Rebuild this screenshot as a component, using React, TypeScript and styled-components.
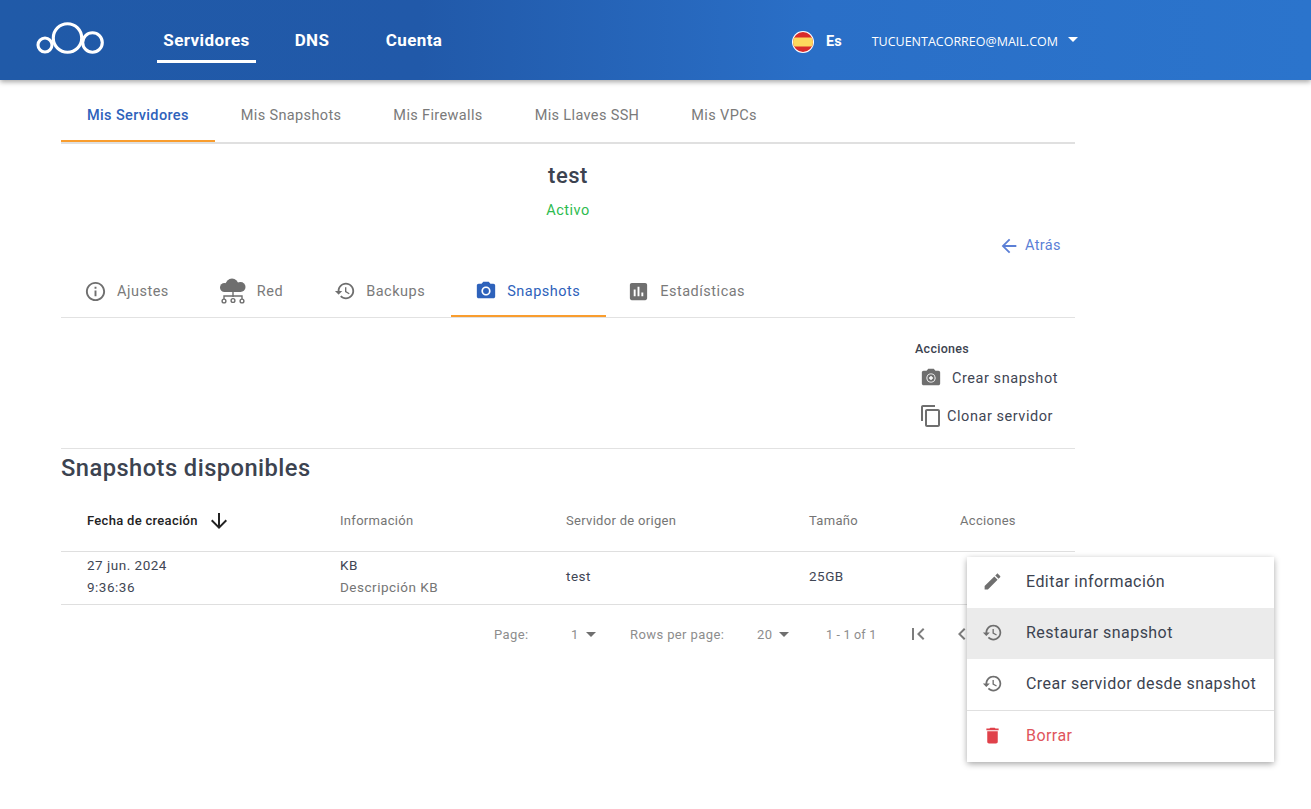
import * as React from "react";
import styled, { createGlobalStyle } from "styled-components";

const GlobalStyle = createGlobalStyle`
  html, body {
    margin: 0;
    padding: 0;
    background: #fff;
    font-family: Roboto, "Liberation Sans", sans-serif;
    color: #3c4350;
    overflow: hidden;
  }
  * { box-sizing: border-box; }
`;

const Page = styled.div`
  position: relative;
  width: 1311px;
  height: 809px;
  overflow: hidden;
`;

const TopBar = styled.header`
  height: 80px;
  display: flex;
  align-items: center;
  padding-left: 35px;
  background: linear-gradient(90deg, #205aa8 0%, #2159a9 32%, #2a6fc7 62%, #2b74cc 100%);
  box-shadow: 0 2px 5px rgba(0, 0, 0, 0.35);
  color: #fff;
`;

const Logo = styled.svg`
  width: 70px;
  height: 36px;
  margin-right: 52px;
`;

const TopNav = styled.nav`
  display: flex;
  height: 80px;
`;

const TopLink = styled.a<{ $active?: boolean; $w: number; $ml?: number }>`
  display: flex;
  align-items: center;
  justify-content: center;
  width: ${(p) => p.$w}px;
  height: 63px;
  margin-left: ${(p) => p.$ml ?? 0}px;
  font-size: 17px;
  font-weight: 700;
  letter-spacing: 0.4px;
  white-space: nowrap;
  padding-top: 20px;
  border-bottom: 3px solid ${(p) => (p.$active ? "#fff" : "transparent")};
`;

const UserArea = styled.div`
  display: flex;
  align-items: center;
  margin-left: auto;
  margin-right: 233px;
  padding-top: 3px;
`;

const Flag = styled.svg`
  width: 22px;
  height: 22px;
  margin-right: 12px;
`;

const Lang = styled.span`
  font-size: 14.5px;
  font-weight: 700;
  margin-right: 30px;
`;

const Email = styled.span`
  font-family: "Open Sans", sans-serif;
  font-size: 12.5px;
  margin-right: 10px;
`;

const Caret = styled.span`
  width: 0;
  height: 0;
  margin-bottom: 5px;
  border-left: 5px solid transparent;
  border-right: 5px solid transparent;
  border-top: 5px solid #fff;
`;

const Main = styled.main`
  width: 1014px;
  margin-left: 61px;
`;

const TabRow = styled.div<{ $h: number; $lineColor: string; $lineH: number }>`
  display: flex;
  height: ${(p) => p.$h}px;
  border-bottom: ${(p) => p.$lineH}px solid ${(p) => p.$lineColor};
`;

const Tab = styled.a<{ $active?: boolean; $pl?: number; $top?: number }>`
  display: flex;
  align-items: center;
  gap: 10px;
  height: 100%;
  padding: ${(p) => p.$top ?? 0}px 26px 0 ${(p) => p.$pl ?? 26}px;
  font-size: 14.5px;
  font-weight: 400;
  letter-spacing: 0.5px;
  white-space: nowrap;
  color: ${(p) => (p.$active ? "#2e62bb" : "#7a7a7a")};
  border-bottom: 2px solid ${(p) => (p.$active ? "#f99d2e" : "transparent")};
`;

const PageTab = styled(Tab)`
  padding-top: 10px;
  letter-spacing: 0.36px;
  font-weight: ${(p) => (p.$active ? 500 : 400)};
`;

const Icon = styled.svg<{ $size?: number; $color?: string }>`
  width: ${(p) => p.$size ?? 24}px;
  height: ${(p) => p.$size ?? 24}px;
  flex: none;
  fill: ${(p) => p.$color ?? "#6f6f6f"};
`;

const ServerHead = styled.section`
  display: flex;
  flex-direction: column;
  align-items: center;
  height: 121px;
  padding-top: 18px;
`;

const ServerName = styled.h1`
  margin: 0;
  font-size: 22px;
  line-height: 28px;
  font-weight: 500;
  letter-spacing: 0.5px;
  color: #3c4350;
`;

const Status = styled.div`
  margin-top: 11px;
  font-size: 14.5px;
  line-height: 20px;
  letter-spacing: 0.5px;
  color: #2dbb4f;
`;

const BackLink = styled.a`
  align-self: flex-end;
  display: flex;
  align-items: center;
  gap: 5px;
  margin: 14px 14px 0 0;
  font-size: 14.5px;
  line-height: 20px;
  letter-spacing: 0.4px;
  color: #5b7fd6;
`;

const ActionsPanel = styled.section`
  display: flex;
  flex-direction: column;
  align-items: flex-start;
  height: 131px;
  padding: 24px 0 0 854px;
  border-bottom: 1px solid #e2e2e2;
`;

const ActionsLabel = styled.div`
  margin-bottom: 3px;
  font-size: 12.5px;
  line-height: 14px;
  font-weight: 500;
  letter-spacing: 0.3px;
  color: #3c4350;
`;

const ActionButton = styled.a<{ $gap: number; $left: number }>`
  display: flex;
  align-items: center;
  gap: ${(p) => p.$gap}px;
  height: 38px;
  padding-left: ${(p) => p.$left}px;
  font-size: 14.5px;
  letter-spacing: 0.55px;
  white-space: nowrap;
  color: #3f4654;
`;

const Heading = styled.h2`
  margin: 0;
  padding-top: 5px;
  height: 44px;
  font-size: 23.7px;
  line-height: 28px;
  font-weight: 500;
  letter-spacing: 0.45px;
  color: #3c4350;
`;

const TableRow = styled.div<{ $h: number; $pb: number }>`
  display: grid;
  grid-template-columns: 253px 226px 243px 151px 141px;
  align-items: center;
  height: ${(p) => p.$h}px;
  padding-bottom: ${(p) => p.$pb}px;
  border-bottom: 1px solid #dfdfdf;
`;

const HeadCell = styled.div<{ $strong?: boolean }>`
  display: flex;
  align-items: center;
  gap: 9px;
  padding-left: 26px;
  font-size: 13px;
  font-weight: ${(p) => (p.$strong ? 500 : 400)};
  letter-spacing: 0.3px;
  color: ${(p) => (p.$strong ? "#222" : "#757575")};
`;

const Cell = styled.div`
  padding-left: 26px;
  font-size: 13.5px;
  line-height: 22px;
  letter-spacing: 0.5px;
  color: #3f4654;
`;

const Muted = styled.div`
  color: #757575;
`;

const Pager = styled.div`
  display: flex;
  align-items: center;
  height: 58px;
  padding-left: 433px;
  font-size: 13px;
  letter-spacing: 0.4px;
  color: #8d8d8d;
`;

const PagerText = styled.span<{ $w: number }>`
  width: ${(p) => p.$w}px;
  flex: none;
`;

const PagerRange = styled(PagerText)`
  font-size: 12.5px;
  letter-spacing: 0.2px;
`;

const PagerValue = styled.span<{ $w: number }>`
  display: flex;
  align-items: center;
  gap: 7px;
  width: ${(p) => p.$w}px;
  flex: none;
`;

const SmallCaret = styled.i`
  width: 0;
  height: 0;
  border-left: 5px solid transparent;
  border-right: 5px solid transparent;
  border-top: 5px solid #6f6f6f;
`;

const Menu = styled.div`
  position: absolute;
  left: 967px;
  top: 557px;
  width: 307px;
  height: 205px;
  background: #fff;
  box-shadow: 0 2px 6px rgba(0, 0, 0, 0.35);
  border-radius: 2px;
`;

const MenuItem = styled.div<{ $hover?: boolean; $danger?: boolean; $line?: boolean }>`
  display: flex;
  align-items: center;
  height: ${(p) => (p.$line ? 52 : 51)}px;
  padding-left: 15px;
  gap: 23px;
  font-size: 16px;
  letter-spacing: 0.45px;
  white-space: nowrap;
  color: ${(p) => (p.$danger ? "#e0555c" : "#3c4350")};
  background: ${(p) => (p.$hover ? "#ebebeb" : "#fff")};
  border-bottom: ${(p) => (p.$line ? "1px solid #e0e0e0" : "none")};
`;

const MenuLabel = styled.span`
  margin-top: -3px;
`;

const MenuIcon = styled.span`
  display: flex;
  margin-top: -2px;
`;

const P = {
  info: "M11 7h2v2h-2zm0 4h2v6h-2zm1-9C6.48 2 2 6.48 2 12s4.48 10 10 10 10-4.48 10-10S17.52 2 12 2zm0 18c-4.41 0-8-3.59-8-8s3.59-8 8-8 8 3.59 8 8-3.59 8-8 8z",
  history:
    "M13 3c-4.97 0-9 4.03-9 9H1l3.89 3.89.07.14L9 12H6c0-3.87 3.13-7 7-7s7 3.13 7 7-3.13 7-7 7c-1.93 0-3.68-.79-4.94-2.06l-1.42 1.42C8.27 19.99 10.51 21 13 21c4.97 0 9-4.03 9-9s-4.03-9-9-9zm-1 5v5l4.28 2.54.72-1.21-3.5-2.08V8H12z",
  camera:
    "M9 2L7.17 4H4c-1.1 0-2 .9-2 2v12c0 1.1.9 2 2 2h16c1.1 0 2-.9 2-2V6c0-1.1-.9-2-2-2h-3.17L15 2H9zm3 15c-2.76 0-5-2.24-5-5s2.24-5 5-5 5 2.24 5 5-2.24 5-5 5z",
  chart:
    "M19 3H5c-1.1 0-2 .9-2 2v14c0 1.1.9 2 2 2h14c1.1 0 2-.9 2-2V5c0-1.1-.9-2-2-2zM9 17H7v-7h2v7zm4 0h-2V7h2v10zm4 0h-2v-4h2v4z",
  edit: "M3 17.25V21h3.75L17.81 9.94l-3.75-3.75L3 17.25zM20.71 7.04c.39-.39.39-1.02 0-1.41l-2.34-2.34c-.39-.39-1.02-.39-1.41 0l-1.83 1.83 3.75 3.75 1.83-1.83z",
  trash: "M6 19c0 1.1.9 2 2 2h8c1.1 0 2-.9 2-2V7H6v12zM19 4h-3.5l-1-1h-5l-1 1H5v2h14V4z",
  copy: "M16 1H4c-1.1 0-2 .9-2 2v14h2V3h12V1zm3 4H8c-1.1 0-2 .9-2 2v14c0 1.1.9 2 2 2h11c1.1 0 2-.9 2-2V7c0-1.1-.9-2-2-2zm0 16H8V7h11v14z",
  first: "M18.41 16.59L13.82 12l4.59-4.59L17 6l-6 6 6 6zM6 6h2v12H6z",
  prev: "M15.41 7.41L14 6l-6 6 6 6 1.41-1.41L10.83 12z",
  down: "M20 12l-1.41-1.41L13 16.17V4h-2v12.17l-5.58-5.59L4 12l8 8 8-8z",
  back: "M20 11H7.83l5.59-5.59L12 4l-8 8 8 8 1.41-1.41L7.83 13H20v-2z",
};

const Glyph = ({ d, size, color }: { d: string; size?: number; color?: string }) => (
  <Icon viewBox="0 0 24 24" $size={size} $color={color}>
    <path d={d} />
  </Icon>
);

const CloudNetwork = () => (
  <svg width="28" height="26" viewBox="0 0 28 26">
    <g fill="#6f6f6f">
      <circle cx="5.5" cy="9.5" r="4.5" />
      <circle cx="13" cy="7" r="6.5" />
      <circle cx="21.5" cy="9" r="5" />
      <rect x="5" y="9" width="17" height="5" />
    </g>
    <path d="M14 13v6M5 21v-3h18v3" stroke="#6f6f6f" strokeWidth="1.4" fill="none" />
    <circle cx="5" cy="23" r="1.9" stroke="#6f6f6f" strokeWidth="1.4" fill="none" />
    <circle cx="14" cy="22.5" r="1.9" stroke="#6f6f6f" strokeWidth="1.4" fill="none" />
    <circle cx="23" cy="23" r="1.9" stroke="#6f6f6f" strokeWidth="1.4" fill="none" />
  </svg>
);

const CameraPlus = () => (
  <Icon viewBox="0 0 24 24" $size={22} $color="#6f6f6f">
    <path d={P.camera} />
    <circle cx="12" cy="12" r="4" />
    <path d="M11.2 9.8h1.6v1.4h1.4v1.6h-1.4v1.4h-1.6v-1.4H9.8v-1.6h1.4z" fill="#fff" />
  </Icon>
);

const App: React.FC = () => {
  return (
    <Page>
      <GlobalStyle />
      <TopBar>
        <Logo viewBox="0 0 70 36">
          <g fill="none" stroke="#fff" strokeWidth="3.1">
            <circle cx="10" cy="23" r="7" />
            <circle cx="32.5" cy="16" r="14.2" />
            <circle cx="57.5" cy="20.5" r="9.8" />
          </g>
        </Logo>
        <TopNav>
          <TopLink $active $w={99}>Servidores</TopLink>
          <TopLink $w={34} $ml={39}>DNS</TopLink>
          <TopLink $w={58} $ml={56}>Cuenta</TopLink>
        </TopNav>
        <UserArea>
          <Flag viewBox="0 0 22 22">
            <clipPath id="flagClip">
              <circle cx="11" cy="11" r="10" />
            </clipPath>
            <circle cx="11" cy="11" r="11" fill="#fff" />
            <g clipPath="url(#flagClip)">
              <rect width="22" height="22" fill="#d92b2b" />
              <rect y="6.5" width="22" height="9" fill="#fdd85d" />
            </g>
          </Flag>
          <Lang>Es</Lang>
          <Email>TUCUENTACORREO@MAIL.COM</Email>
          <Caret />
        </UserArea>
      </TopBar>
      <Main>
        <TabRow $h={64} $lineColor="#e0e0e0" $lineH={2}>
          <PageTab $active>Mis Servidores</PageTab>
          <PageTab>Mis Snapshots</PageTab>
          <PageTab>Mis Firewalls</PageTab>
          <PageTab>Mis Llaves SSH</PageTab>
          <PageTab>Mis VPCs</PageTab>
        </TabRow>
        <ServerHead>
          <ServerName>test</ServerName>
          <Status>Activo</Status>
          <BackLink>
            <Glyph d={P.back} size={22} color="#5b7fd6" />
            Atrás
          </BackLink>
        </ServerHead>
        <TabRow $h={53} $lineColor="#e2e2e2" $lineH={1}>
          <Tab $pl={23} $top={2}>
            <Glyph d={P.info} size={23} />
            Ajustes
          </Tab>
          <Tab $pl={24} $top={2}>
            <CloudNetwork />
            Red
          </Tab>
          <Tab $pl={25} $top={2}>
            <Glyph d={P.history} size={22} />
            Backups
          </Tab>
          <Tab $active $pl={24} $top={2}>
            <Icon viewBox="0 0 24 24" $size={22} $color="#2e62bb">
              <path d={P.camera} />
              <circle cx="12" cy="12" r="3.2" />
            </Icon>
            Snapshots
          </Tab>
          <Tab $pl={21} $top={2}>
            <Glyph d={P.chart} size={23} />
            Estadísticas
          </Tab>
        </TabRow>
        <ActionsPanel>
          <ActionsLabel>Acciones</ActionsLabel>
          <ActionButton $gap={10} $left={5}>
            <CameraPlus />
            Crear snapshot
          </ActionButton>
          <ActionButton $gap={4} $left={4}>
            <Glyph d={P.copy} size={24} />
            Clonar servidor
          </ActionButton>
        </ActionsPanel>
        <Heading>Snapshots disponibles</Heading>
        <TableRow $h={59} $pb={3}>
          <HeadCell $strong>
            Fecha de creación
            <Glyph d={P.down} size={24} color="#222" />
          </HeadCell>
          <HeadCell>Información</HeadCell>
          <HeadCell>Servidor de origen</HeadCell>
          <HeadCell>Tamaño</HeadCell>
          <HeadCell>Acciones</HeadCell>
        </TableRow>
        <TableRow $h={53} $pb={5}>
          <Cell>
            27 jun. 2024
            <br />
            9:36:36
          </Cell>
          <Cell>
            KB
            <Muted>Descripción KB</Muted>
          </Cell>
          <Cell>test</Cell>
          <Cell>25GB</Cell>
          <Cell />
        </TableRow>
        <Pager>
          <PagerText $w={77}>Page:</PagerText>
          <PagerValue $w={59}>
            1 <SmallCaret />
          </PagerValue>
          <PagerText $w={127}>Rows per page:</PagerText>
          <PagerValue $w={69}>
            20 <SmallCaret />
          </PagerValue>
          <PagerRange $w={80}>1 - 1 of 1</PagerRange>
          <Glyph d={P.first} size={24} color="#7d7d7d" />
          <PagerText $w={20} />
          <Glyph d={P.prev} size={24} color="#7d7d7d" />
        </Pager>
      </Main>
      <Menu>
        <MenuItem>
          <MenuIcon><Glyph d={P.edit} size={21} /></MenuIcon>
          <MenuLabel>Editar información</MenuLabel>
        </MenuItem>
        <MenuItem $hover>
          <MenuIcon><Glyph d={P.history} size={21} /></MenuIcon>
          <MenuLabel>Restaurar snapshot</MenuLabel>
        </MenuItem>
        <MenuItem $line>
          <MenuIcon><Glyph d={P.history} size={21} /></MenuIcon>
          <MenuLabel>Crear servidor desde snapshot</MenuLabel>
        </MenuItem>
        <MenuItem $danger>
          <MenuIcon><Glyph d={P.trash} size={21} color="#e0414a" /></MenuIcon>
          <MenuLabel>Borrar</MenuLabel>
        </MenuItem>
      </Menu>
    </Page>
  );
};

export default App;
